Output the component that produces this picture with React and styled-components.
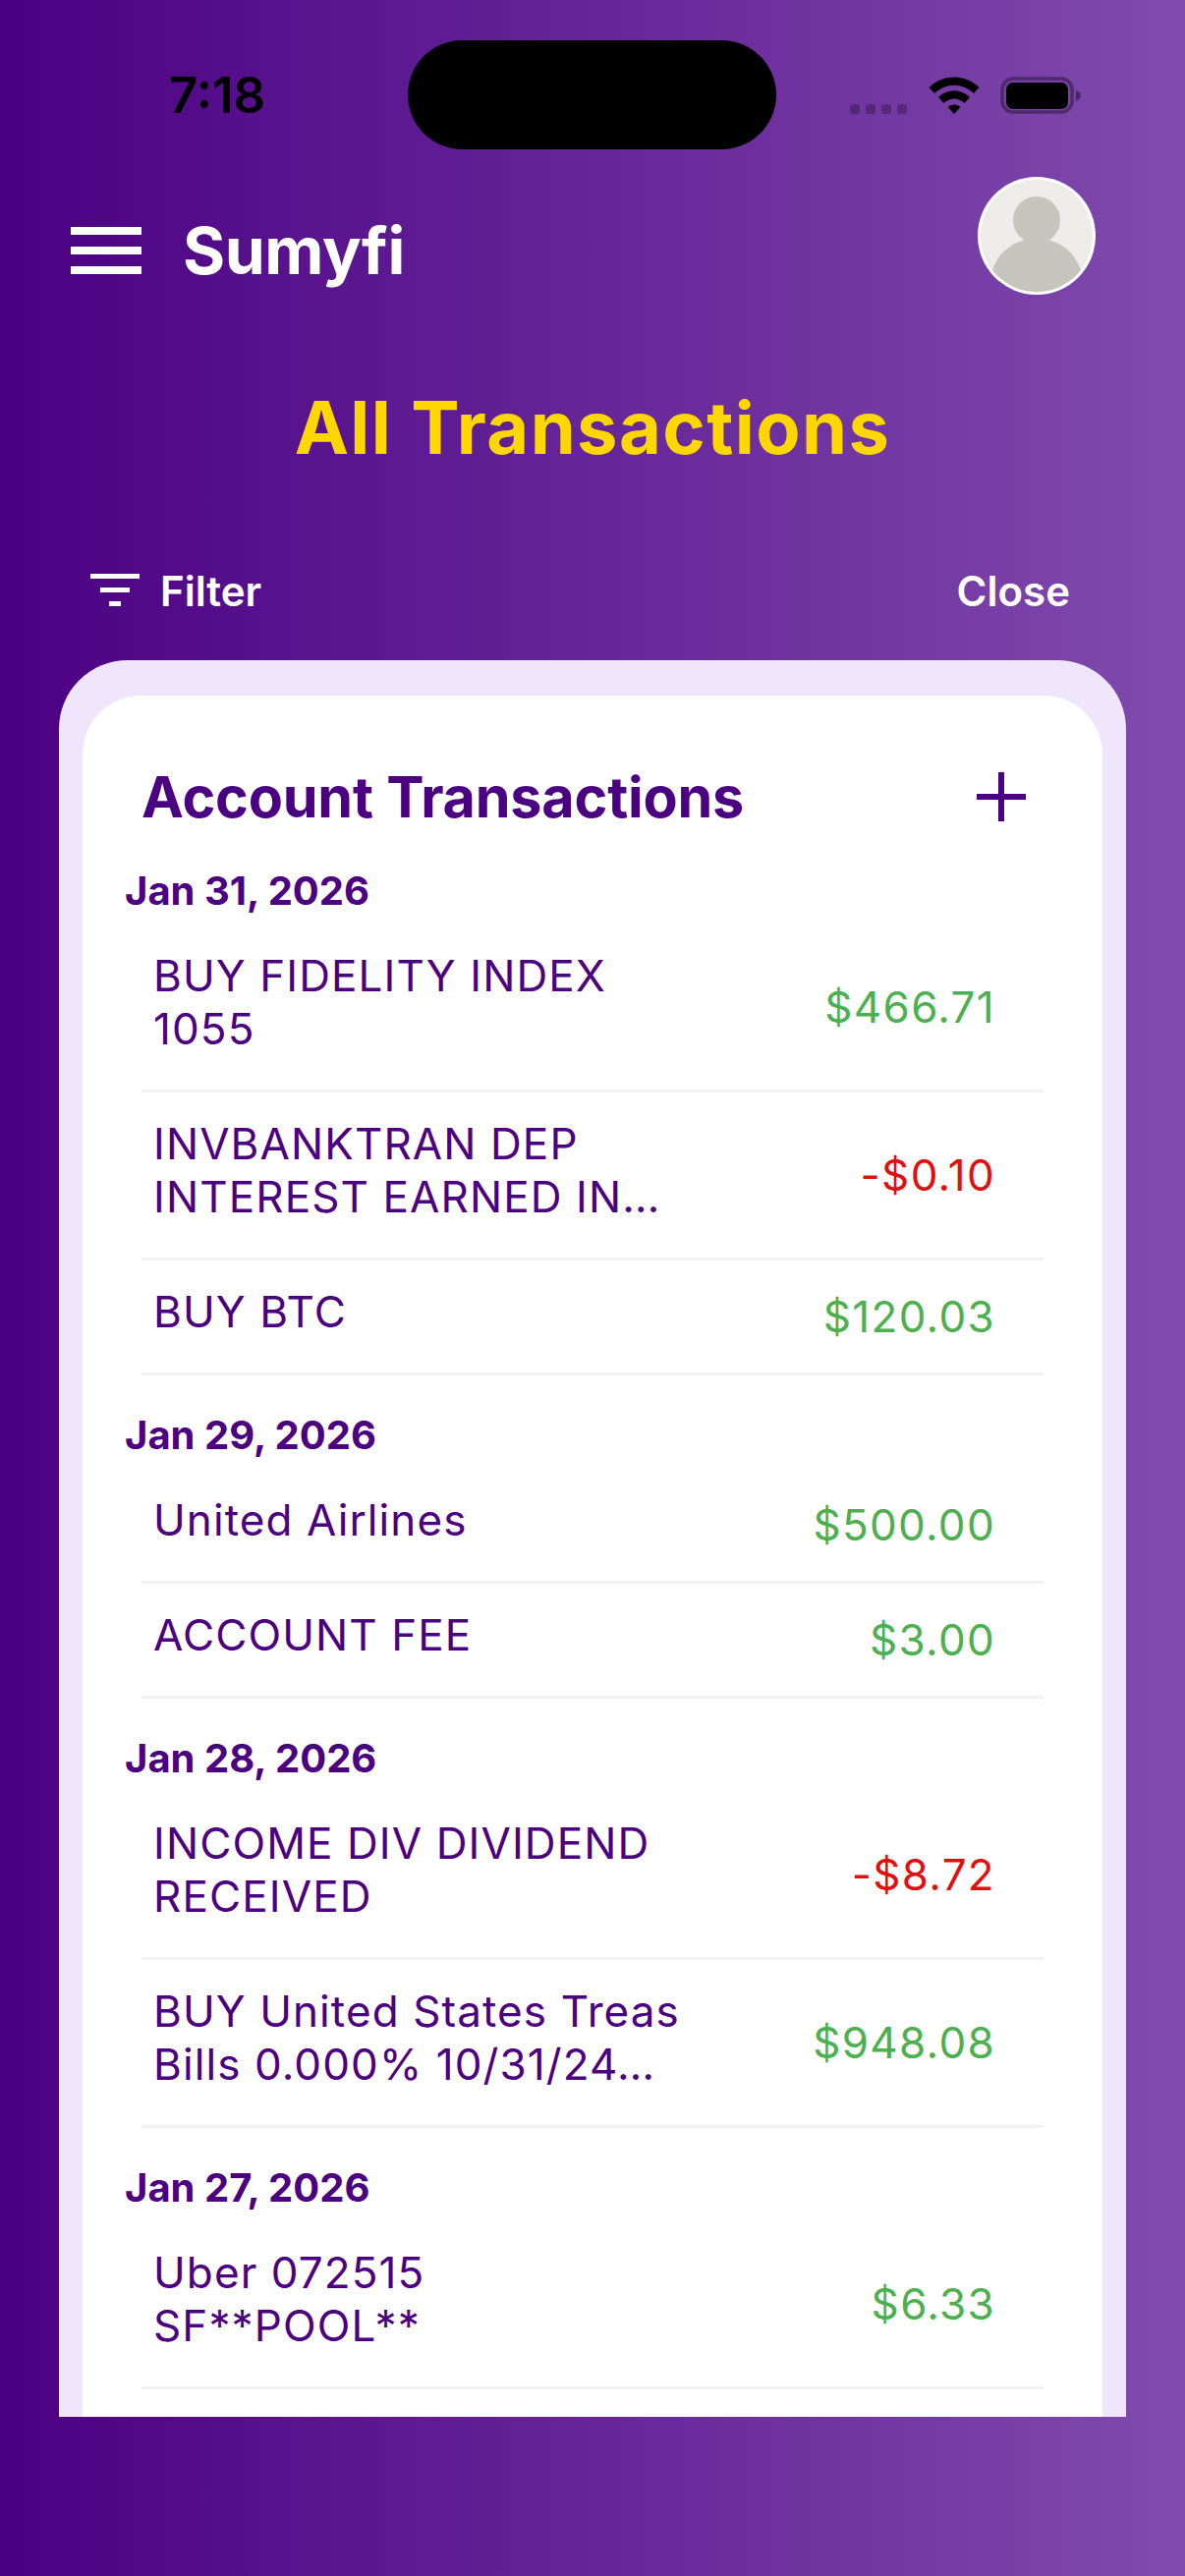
import React from 'react'
import styled, { createGlobalStyle } from 'styled-components'

const GlobalStyle = createGlobalStyle`
    html, body {
        margin: 0;
        padding: 0;
        background: #4b0082;
    }
    * {
        box-sizing: border-box;
    }
`

const Screen = styled.div`
    width: 1206px;
    height: 2622px;
    overflow: hidden;
    display: flex;
    flex-direction: column;
    font-family: Inter, "Liberation Sans", sans-serif;
    background: linear-gradient(90deg, #4b0082 0%, #804bae 100%);
`

const StatusBar = styled.div`
    height: 180px;
    padding: 41px 0 0 172px;
    display: flex;
    align-items: flex-start;
`

const Time = styled.div`
    width: 243px;
    margin-top: 26px;
    font-size: 51px;
    line-height: 60px;
    font-weight: 600;
    color: #000;
`

const Island = styled.div`
    width: 375px;
    height: 111px;
    border-radius: 56px;
    background: #000;
`

const StatusIcons = styled.div`
    margin: 37px 0 0 75px;
    height: 38px;
    display: flex;
    align-items: flex-end;
`

const Dots = styled.div`
    display: flex;
    gap: 6px;
    margin-right: 22px;
`

const Dot = styled.span`
    width: 10px;
    height: 10px;
    border-radius: 3px;
    background: rgba(0, 0, 0, 0.25);
`

const Battery = styled.svg`
    margin-left: 21px;
`

const Header = styled.div`
    height: 120px;
    padding: 0 91px 0 72px;
    display: flex;
    align-items: center;
`

const Brand = styled.div`
    flex: 1;
    display: flex;
    align-items: center;
    gap: 42px;
    margin-top: 30px;
`

const MenuIcon = styled.div`
    width: 72px;
    height: 48px;
    display: flex;
    flex-direction: column;
    justify-content: space-between;
`

const MenuBar = styled.span`
    height: 8px;
    background: #fff;
`

const BrandName = styled.div`
    font-size: 66px;
    line-height: 80px;
    font-weight: 700;
    letter-spacing: -0.5px;
    color: #fff;
`

const Avatar = styled.svg`
    display: block;
`

const PageTitle = styled.h1`
    margin: 90px 0 0;
    text-align: center;
    font-size: 74px;
    line-height: 90px;
    font-weight: 700;
    letter-spacing: 1.4px;
    color: #ffd700;
`

const Toolbar = styled.div`
    margin-top: 91px;
    height: 60px;
    padding: 0 117px 0 92px;
    display: flex;
    align-items: center;
    justify-content: space-between;
    color: #fff;
    font-size: 42px;
    font-weight: 600;
`

const FilterButton = styled.div`
    display: flex;
    align-items: center;
    gap: 21px;
`

const Card = styled.div`
    flex: 1;
    margin: 41px 60px 162px;
    min-height: 0;
    padding: 36px 24px 0;
    background: #efe6fd;
    border-radius: 70px 70px 0 0;
    overflow: hidden;
`

const CardInner = styled.div`
    height: 100%;
    padding: 66px 60px 0 43px;
    background: #fff;
    border-radius: 60px 60px 0 0;
`

const CardHeader = styled.div`
    height: 74px;
    padding: 0 18px 0 17px;
    display: flex;
    align-items: center;
    justify-content: space-between;
`

const CardTitle = styled.h2`
    margin: 0;
    font-size: 57.5px;
    line-height: 74px;
    font-weight: 700;
    letter-spacing: -0.2px;
    color: #4b0082;
`

const DateLabel = styled.div`
    margin-top: ${props => props.first ? '35px' : '37px'};
    margin-bottom: 10px;
    font-size: 40px;
    line-height: 48px;
    font-weight: 700;
    color: #4b0082;
`

const Row = styled.div`
    margin-left: 17px;
    padding: 25px 49px 35px 13px;
    border-bottom: 3px solid #f2f2f2;
    display: flex;
    align-items: center;
    justify-content: space-between;
`

const Name = styled.div`
    margin-left: -1px;
    font-size: 44px;
    line-height: 54px;
    letter-spacing: 1.1px;
    color: #4b0082;
`

const Amount = styled.div`
    font-size: 44px;
    line-height: 54px;
    letter-spacing: 1.3px;
    margin: 5px 0 -5px;
    color: ${props => props.negative ? '#e01010' : '#4caf50'};
`

const groups = [
    {
        date: 'Jan 31, 2026',
        rows: [
            { name: ['BUY FIDELITY INDEX', '1055'], amount: '$466.71' },
            { name: ['INVBANKTRAN DEP', 'INTEREST EARNED IN…'], amount: '-$0.10', negative: true },
            { name: ['BUY BTC'], amount: '$120.03' }
        ]
    },
    {
        date: 'Jan 29, 2026',
        rows: [
            { name: ['United Airlines'], amount: '$500.00' },
            { name: ['ACCOUNT FEE'], amount: '$3.00' }
        ]
    },
    {
        date: 'Jan 28, 2026',
        rows: [
            { name: ['INCOME DIV DIVIDEND', 'RECEIVED'], amount: '-$8.72', negative: true },
            { name: ['BUY United States Treas', 'Bills 0.000% 10/31/24…'], amount: '$948.08' }
        ]
    },
    {
        date: 'Jan 27, 2026',
        rows: [
            { name: ['Uber 072515', 'SF**POOL**'], amount: '$6.33' }
        ]
    }
]

function WifiIcon() {
    return (
        <svg width="52" height="38" viewBox="0 0 52 38">
            <path d="M0.5 11 C15 -3 37 -3 51.5 11 L46 17 C34 6 18 6 6 17 Z" fill="#000" />
            <path d="M10 21 C19 12 33 12 42 21 L36.5 27 C30 21 22 21 15.5 27 Z" fill="#000" />
            <path d="M19.5 31 C23 27.5 29 27.5 32.5 31 L26 38 Z" fill="#000" />
        </svg>
    )
}

function BatteryIcon() {
    return (
        <Battery width="82" height="38" viewBox="0 0 82 38">
            <rect x="2" y="2" width="71" height="34" rx="11" fill="none" stroke="rgba(0,0,0,0.35)" strokeWidth="3.5" />
            <rect x="6" y="6" width="63" height="27" rx="7" fill="#000" />
            <path d="M77 14 C80 15 82 17 82 19.5 C82 22 80 24 77 25 Z" fill="rgba(0,0,0,0.4)" />
        </Battery>
    )
}

function AvatarIcon() {
    return (
        <Avatar width="120" height="120" viewBox="0 0 120 120">
            <defs>
                <clipPath id="avatarClip">
                    <circle cx="60" cy="60" r="57" />
                </clipPath>
            </defs>
            <circle cx="60" cy="60" r="60" fill="#fff" />
            <circle cx="60" cy="60" r="57" fill="#eeece8" />
            <g clipPath="url(#avatarClip)" fill="#c6c4be">
                <circle cx="60" cy="44" r="24" />
                <path d="M15 95 C22 74 40 63 60 63 C80 63 98 74 105 95 L105 120 L15 120 Z" />
            </g>
        </Avatar>
    )
}

function FilterIcon() {
    return (
        <svg width="50" height="34" viewBox="0 0 50 34">
            <rect x="0" y="0" width="50" height="5" fill="#fff" />
            <rect x="10" y="14" width="30" height="5" fill="#fff" />
            <rect x="19" y="28" width="12" height="5" fill="#fff" />
        </svg>
    )
}

function PlusIcon() {
    return (
        <svg width="50" height="50" viewBox="0 0 50 50">
            <rect x="22" y="0" width="6" height="50" fill="#4b0082" />
            <rect x="0" y="22" width="50" height="6" fill="#4b0082" />
        </svg>
    )
}

export default function App() {
    return (
        <>
            <GlobalStyle />
            <Screen>
                <StatusBar>
                    <Time>7:18</Time>
                    <Island />
                    <StatusIcons>
                        <Dots>
                            <Dot />
                            <Dot />
                            <Dot />
                            <Dot />
                        </Dots>
                        <WifiIcon />
                        <BatteryIcon />
                    </StatusIcons>
                </StatusBar>
                <Header>
                    <Brand>
                        <MenuIcon>
                            <MenuBar />
                            <MenuBar />
                            <MenuBar />
                        </MenuIcon>
                        <BrandName>Sumyfi</BrandName>
                    </Brand>
                    <AvatarIcon />
                </Header>
                <PageTitle>All Transactions</PageTitle>
                <Toolbar>
                    <FilterButton>
                        <FilterIcon />
                        <span>Filter</span>
                    </FilterButton>
                    <span>Close</span>
                </Toolbar>
                <Card>
                    <CardInner>
                        <CardHeader>
                            <CardTitle>Account Transactions</CardTitle>
                            <PlusIcon />
                        </CardHeader>
                        {groups.map((group, index) => (
                            <div key={group.date}>
                                <DateLabel first={index === 0}>{group.date}</DateLabel>
                                {group.rows.map(row => (
                                    <Row key={row.name[0]}>
                                        <Name>
                                            {row.name.map(line => <div key={line}>{line}</div>)}
                                        </Name>
                                        <Amount negative={row.negative}>{row.amount}</Amount>
                                    </Row>
                                ))}
                            </div>
                        ))}
                    </CardInner>
                </Card>
            </Screen>
        </>
    )
}
